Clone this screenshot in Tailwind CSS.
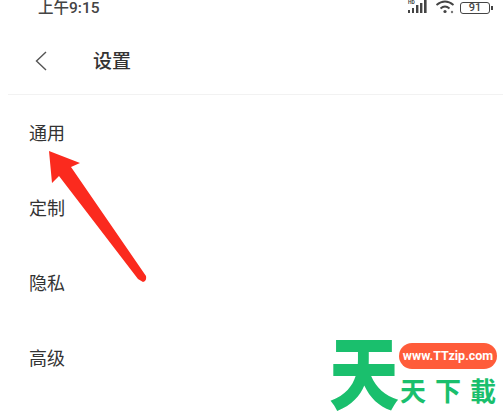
<!DOCTYPE html>
<html lang="zh">
<head>
  <meta charset="UTF-8" />
  <title>设置</title>
  <script src="https://cdn.jsdelivr.net/npm/@tailwindcss/browser@4"></script>
</head>
<body class="bg-white overflow-hidden font-['Roboto','Noto_Sans_CJK_SC',sans-serif]">
<div class="relative w-[503px] h-[412px] overflow-hidden bg-white">

  <!-- Status bar -->
  <div class="h-[28px] pl-[38px] pr-[10px] flex justify-between items-start text-[#444]">
    <span class="text-[15.5px] font-medium leading-[16px]">上午9:15</span>
    <div class="flex items-start">
      <div class="relative w-[24px] h-[14px]">
        <span class="absolute left-[1px] top-0 text-[5px] font-bold leading-none">HD</span>
        <svg width="24" height="14" viewBox="0 0 24 14" fill="#444" class="absolute left-0 top-0">
          <rect x="1" y="10" width="2" height="3" />
          <rect x="5" y="8" width="2" height="5" />
          <rect x="9" y="5" width="2.4" height="8" />
          <rect x="13" y="3" width="2.4" height="10" />
          <rect x="17" y="0" width="2.6" height="13" />
        </svg>
      </div>
      <svg width="24" height="14" viewBox="0 0 24 14" fill="none" stroke="#444" stroke-width="1.8" class="ml-[4px]">
        <path d="M1.5 5 Q10 -2 18.5 5" />
        <path d="M5.5 8.5 Q10 4.5 14.5 8.5" />
        <circle cx="10" cy="11.5" r="1.6" fill="#444" stroke="none" />
        <circle cx="17" cy="12" r="1.2" fill="#777" stroke="none" />
      </svg>
      <div class="flex items-center mt-[2px] ml-[1px]">
        <div class="w-[30px] h-[12px] border border-[#444] rounded-[3px] text-[11px] font-medium leading-[10px] text-center">91</div>
        <div class="ml-[1px] w-[2px] h-[4px] bg-[#444]"></div>
      </div>
    </div>
  </div>

  <!-- Header -->
  <header class="ml-[8px] h-[67px] border-b border-[#f2f2f2] flex items-center pl-[27px]">
    <svg width="12" height="20" viewBox="0 0 12 20" fill="none" stroke="#555" stroke-width="1.4">
      <path d="M11 1 L1.5 10 L11 19" />
    </svg>
    <h1 class="ml-[46px] text-[19px] font-medium text-[#333] leading-none">设置</h1>
  </header>

  <!-- Menu rows -->
  <ul class="pl-[29px] pt-[1px] text-[18px] text-[#333]">
    <li class="h-[75px] flex items-center">通用</li>
    <li class="h-[75px] flex items-center">定制</li>
    <li class="h-[75px] flex items-center">隐私</li>
    <li class="h-[75px] flex items-center">高级</li>
  </ul>

  <!-- Arrow annotation -->
  <svg class="absolute left-0 top-0" width="503" height="412" viewBox="0 0 503 412">
    <path d="M49 151 L80 163 L71 167 L146 276 Q147 281 143 282 L138 279 L59 176 L52 183 Z" fill="#fb2a1e" />
  </svg>

  <!-- Watermark -->
  <div class="absolute left-[330px] top-[330px] w-[173px] h-[82px] text-[#1abf6d]">
    <span class="absolute left-[-1px] top-[6px] text-[70px] leading-[76px] font-black origin-bottom scale-y-[1.14] font-['Noto_Sans_CJK_SC',sans-serif]">天</span>
    <div class="absolute left-[69px] top-[13px] w-[98px] h-[26px] rounded-full bg-[#ff5c3a] text-white text-[12.5px] font-bold leading-[26px] text-center font-['Roboto',sans-serif]">www.TTzip.com</div>
    <div class="absolute left-[70px] top-[43px] flex gap-[9px] text-[26px] font-bold leading-[34px] font-['Noto_Sans_CJK_TC',sans-serif]">
      <span>天</span><span>下</span><span>載</span>
    </div>
  </div>
</div>
</body>
</html>
